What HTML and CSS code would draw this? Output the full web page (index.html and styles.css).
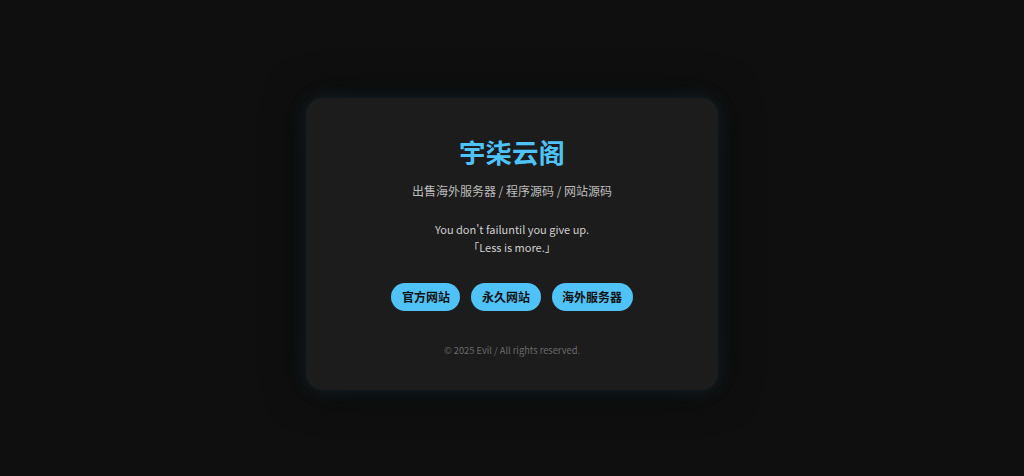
FILE: index.html
```html
<!DOCTYPE html>
<html lang="zh-CN">
<head>
<meta charset="utf-8">
<title>宇柒云阁</title>
<link rel="stylesheet" href="styles.css">
</head>
<body>
<main class="card">
  <h1 class="title">宇柒云阁</h1>
  <p class="subtitle">出售海外服务器 / 程序源码 / 网站源码</p>
  <div class="quote">
    <p>You don't failuntil you give up.</p>
    <p>「Less is more.」</p>
  </div>
  <nav class="links">
    <a class="btn" href="#">官方网站</a>
    <a class="btn" href="#">永久网站</a>
    <a class="btn" href="#">海外服务器</a>
  </nav>
  <footer class="footer">© 2025 Evil / All rights reserved.</footer>
</main>
</body>
</html>
```
FILE: styles.css
```css
html, body {
  margin: 0;
  padding: 0;
}
body {
  background: #0f0f0f;
  min-height: 100vh;
  box-sizing: border-box;
  padding-top: 11px;
  display: flex;
  align-items: center;
  justify-content: center;
  font-family: "Noto Sans CJK SC", "Noto Sans", sans-serif;
}
.card {
  width: 412px;
  box-sizing: border-box;
  background: #1c1c1c;
  border-radius: 16px;
  padding: 38px 20px 32px;
  text-align: center;
  box-shadow: 0 0 20px rgba(79, 195, 247, 0.13), 0 0 40px rgba(0, 0, 0, 0.6);
}
.title {
  margin: 0;
  font-size: 26.5px;
  line-height: 32px;
  font-weight: 700;
  color: #4fc3f7;
}
.subtitle {
  margin: 14px 0 0;
  font-size: 12px;
  line-height: 18px;
  color: #bdbdbd;
}
.quote {
  margin-top: 20px;
  font-size: 11px;
  line-height: 18px;
  color: #cfcfcf;
}
.quote p {
  margin: 0;
}
.links {
  margin-top: 27px;
  display: flex;
  justify-content: center;
  gap: 11px;
}
.btn {
  display: inline-block;
  background: #4fc3f7;
  color: #111;
  text-decoration: none;
  font-size: 12px;
  font-weight: 700;
  line-height: 28px;
  padding: 0 10.5px;
  border-radius: 14px;
}
.footer {
  margin-top: 31px;
  font-size: 9.3px;
  line-height: 16px;
  color: #6a6a6a;
}
```
